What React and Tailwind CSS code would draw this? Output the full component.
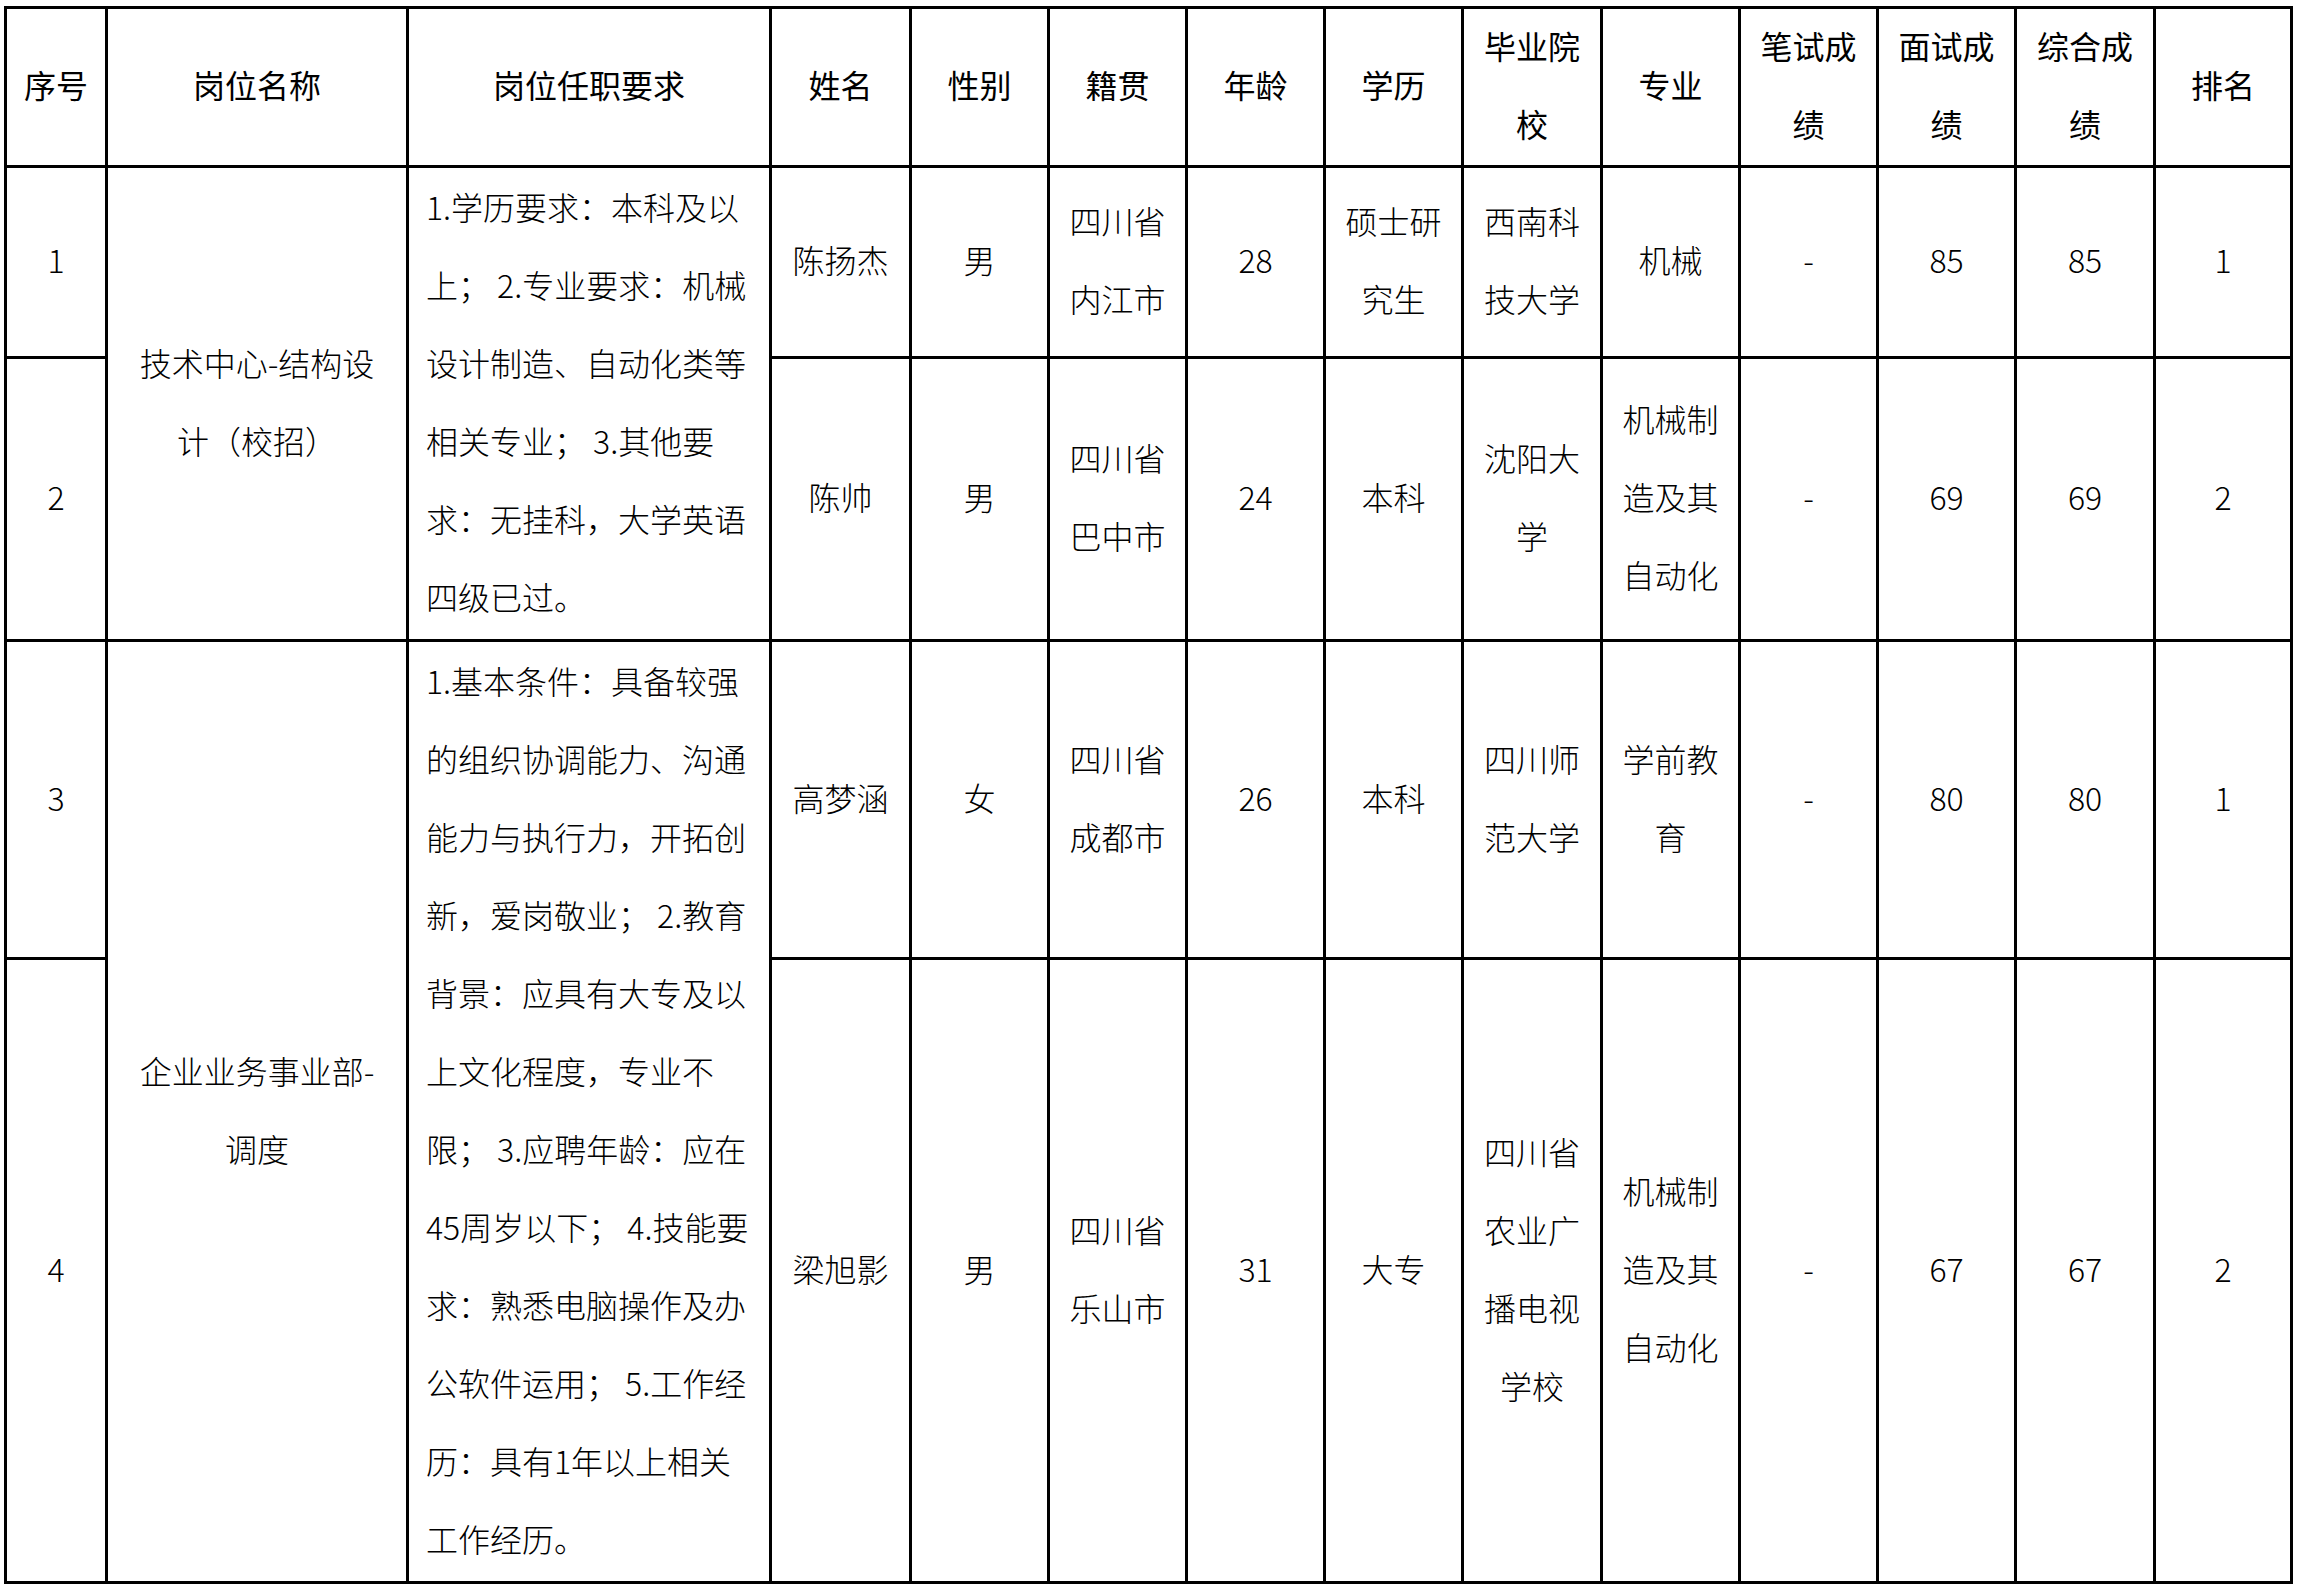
import React from "react";

const font = {
  fontFamily: '"Noto Sans CJK SC", "Noto Sans", sans-serif',
};

const headers = [
  ["序号"],
  ["岗位名称"],
  ["岗位任职要求"],
  ["姓名"],
  ["性别"],
  ["籍贯"],
  ["年龄"],
  ["学历"],
  ["毕业院", "校"],
  ["专业"],
  ["笔试成", "绩"],
  ["面试成", "绩"],
  ["综合成", "绩"],
  ["排名"],
];

const groups = [
  {
    title: ["技术中心-结构设", "计（校招）"],
    desc: [
      "1.学历要求：本科及以",
      "上； 2.专业要求：机械",
      "设计制造、自动化类等",
      "相关专业； 3.其他要",
      "求：无挂科，大学英语",
      "四级已过。",
    ],
    rows: [
      {
        id: "1",
        name: "陈扬杰",
        sex: "男",
        home: ["四川省", "内江市"],
        age: "28",
        edu: ["硕士研", "究生"],
        school: ["西南科", "技大学"],
        major: ["机械"],
        written: "-",
        interview: "85",
        total: "85",
        rank: "1",
        h: "h-[191px]",
      },
      {
        id: "2",
        name: "陈帅",
        sex: "男",
        home: ["四川省", "巴中市"],
        age: "24",
        edu: ["本科"],
        school: ["沈阳大", "学"],
        major: ["机械制", "造及其", "自动化"],
        written: "-",
        interview: "69",
        total: "69",
        rank: "2",
        h: "h-[283px]",
      },
    ],
  },
  {
    title: ["企业业务事业部-", "调度"],
    desc: [
      "1.基本条件：具备较强",
      "的组织协调能力、沟通",
      "能力与执行力，开拓创",
      "新，爱岗敬业； 2.教育",
      "背景：应具有大专及以",
      "上文化程度，专业不",
      "限； 3.应聘年龄：应在",
      "45周岁以下； 4.技能要",
      "求：熟悉电脑操作及办",
      "公软件运用； 5.工作经",
      "历：具有1年以上相关",
      "工作经历。",
    ],
    rows: [
      {
        id: "3",
        name: "高梦涵",
        sex: "女",
        home: ["四川省", "成都市"],
        age: "26",
        edu: ["本科"],
        school: ["四川师", "范大学"],
        major: ["学前教", "育"],
        written: "-",
        interview: "80",
        total: "80",
        rank: "1",
        h: "h-[318px]",
      },
      {
        id: "4",
        name: "梁旭影",
        sex: "男",
        home: ["四川省", "乐山市"],
        age: "31",
        edu: ["大专"],
        school: ["四川省", "农业广", "播电视", "学校"],
        major: ["机械制", "造及其", "自动化"],
        written: "-",
        interview: "67",
        total: "67",
        rank: "2",
        h: "h-[624px]",
      },
    ],
  },
];

const widths = [
  "w-[101px]",
  "w-[301px]",
  "w-[363px]",
  "w-[140px]",
  "w-[138px]",
  "w-[138px]",
  "w-[138px]",
  "w-[138px]",
  "w-[139px]",
  "w-[138px]",
  "w-[138px]",
  "w-[138px]",
  "w-[139px]",
  "w-[137px]",
];

const cell = "border-[3px] border-black p-0 text-center align-middle";

// cell text, one line per entry; nudged up a little like the word-processor output
const Lines = ({ lines }) => (
  <div className="-mt-[6px]">
    {[].concat(lines).map((l, i) => (
      <div key={i} className="whitespace-nowrap">
        {l}
      </div>
    ))}
  </div>
);

export default function App() {
  return (
    <div className="bg-white min-h-screen pt-[6px] pl-[4px]" style={font}>
      <table className="border-collapse table-fixed text-[32px] leading-[78px] text-black font-light">
        <colgroup>
          {widths.map((w, i) => (
            <col key={i} className={w} />
          ))}
        </colgroup>
        <thead>
          <tr className="h-[159px]">
            {headers.map((h, i) => (
              <th key={i} className={cell + " font-normal"}>
                <Lines lines={h} />
              </th>
            ))}
          </tr>
        </thead>
        <tbody>
          {groups.map((g) =>
            g.rows.map((r, idx) => (
              <tr key={r.id} className={r.h}>
                <td className={cell}>
                  <Lines lines={r.id} />
                </td>
                {idx === 0 && (
                  <>
                    <td className={cell} rowSpan={2}>
                      <Lines lines={g.title} />
                    </td>
                    <td className={cell + " !text-left pl-[17px]"} rowSpan={2}>
                      <Lines lines={g.desc} />
                    </td>
                  </>
                )}
                {[r.name, r.sex, r.home, r.age, r.edu, r.school, r.major, r.written, r.interview, r.total, r.rank].map(
                  (v, i) => (
                    <td key={i} className={cell}>
                      <Lines lines={v} />
                    </td>
                  )
                )}
              </tr>
            ))
          )}
        </tbody>
      </table>
    </div>
  );
}
